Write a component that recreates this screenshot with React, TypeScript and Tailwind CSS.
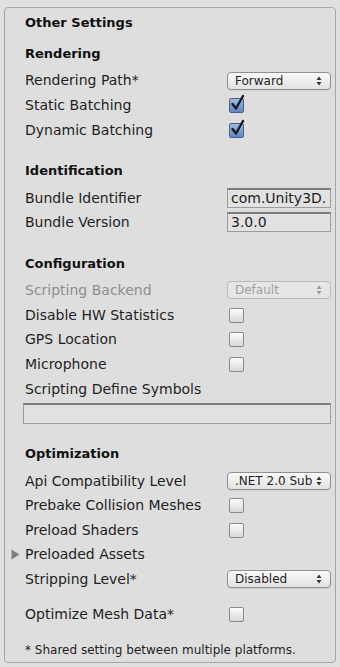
import React from "react";

const font = "font-['DejaVu_Sans',sans-serif]";

function Arrows({ dim }: { dim?: boolean }) {
  return (
    <svg width="6" height="10" viewBox="0 0 6 10" className="ml-auto shrink-0">
      <path d="M3 0.5 L5.5 4 L0.5 4 Z" fill={dim ? "#9a9a9a" : "#333"} />
      <path d="M3 9.5 L5.5 6 L0.5 6 Z" fill={dim ? "#9a9a9a" : "#333"} />
    </svg>
  );
}

function Dropdown({ value, dim }: { value: string; dim?: boolean }) {
  return (
    <div
      className={`flex items-center w-[104px] h-[18px] rounded-[4px] border pl-[7px] pr-[8px] text-[12px] leading-none ${
        dim
          ? "border-[#b9b9b9] bg-[#e6e6e6] text-[#a0a0a0]"
          : "border-[#8f8f8f] bg-gradient-to-b from-[#fafafa] to-[#e2e2e2] text-[#1e1e1e] shadow-[0_1px_0_rgba(0,0,0,0.08)]"
      }`}
    >
      <span className="whitespace-nowrap">{value}</span>
      <Arrows dim={dim} />
    </div>
  );
}

function Check({ on }: { on?: boolean }) {
  return (
    <div className="ml-[2px] relative w-[15px] h-[15px]">
      <div
        className={`w-[15px] h-[15px] rounded-[2px] border ${
          on
            ? "border-[#4a5f86] bg-gradient-to-b from-[#9fbbe6] to-[#5f86c4]"
            : "border-[#8a8a8a] bg-gradient-to-b from-[#fdfdfd] to-[#d8d8d8]"
        }`}
      />
      {on && (
        <svg width="16" height="18" viewBox="0 0 16 18" className="absolute left-[1px] top-[-4px]">
          <path d="M2.5 10 L6 14.5 L13 2" fill="none" stroke="#141a26" strokeWidth="2.4" strokeLinecap="round" strokeLinejoin="round" />
        </svg>
      )}
    </div>
  );
}

function Field({ value, wide }: { value?: string; wide?: boolean }) {
  return (
    <div
      className={`flex items-center h-[20px] border border-[#9c9c9c] border-t-[#7c7c7c] border-t-2 bg-[#e2e2e2] pl-[3px] text-[14px] text-[#1e1e1e] overflow-hidden whitespace-nowrap ${
        wide ? "w-full h-[21px]" : "w-[104px]"
      }`}
    >
      {value}
    </div>
  );
}

function Row({
  label,
  children,
  h = "h-[25px]",
  dim,
}: {
  label: string;
  children?: React.ReactNode;
  h?: string;
  dim?: boolean;
}) {
  return (
    <div className={`flex items-center ${h}`}>
      <div className={`w-[202px] whitespace-nowrap ${dim ? "text-[#8e8e8e]" : "text-[#1e1e1e]"}`}>{label}</div>
      {children}
    </div>
  );
}

function Heading({ text, mt }: { text: string; mt: string }) {
  return <div className={`h-[24px] flex items-center font-bold text-[13px] text-[#111] ${mt}`}>{text}</div>;
}

export default function App() {
  return (
    <div className={`w-[340px] h-[667px] bg-[#e0e0e0] pt-[7px] px-[4px] ${font}`}>
      <div className="h-[656px] border border-[#a6a6a6] rounded-[4px] bg-[#dedede] pl-[20px] pr-[4px] pt-[3px] text-[14px]">
        <Heading text="Other Settings" mt="mt-0" />
        <Heading text="Rendering" mt="mt-[7px]" />
        <div className="mt-[2px]">
          <Row label="Rendering Path*">
            <Dropdown value="Forward" />
          </Row>
          <Row label="Static Batching">
            <Check on />
          </Row>
          <Row label="Dynamic Batching">
            <Check on />
          </Row>
        </div>

        <Heading text="Identification" mt="mt-[16px]" />
        <div className="mt-[3px]">
          <Row label="Bundle Identifier" h="h-[24px]">
            <Field value="com.Unity3D." />
          </Row>
          <Row label="Bundle Version" h="h-[24px]">
            <Field value="3.0.0" />
          </Row>
        </div>

        <Heading text="Configuration" mt="mt-[18px]" />
        <div className="mt-[2px]">
          <Row label="Scripting Backend" h="h-[24.75px]" dim>
            <Dropdown value="Default" dim />
          </Row>
          <Row label="Disable HW Statistics" h="h-[24.75px]">
            <Check />
          </Row>
          <Row label="GPS Location" h="h-[24.75px]">
            <Check />
          </Row>
          <Row label="Microphone" h="h-[24.75px]">
            <Check />
          </Row>
          <Row label="Scripting Define Symbols" h="h-[24.75px]" />
        </div>
        <div className="mt-[1px] -ml-[2px]">
          <Field wide />
        </div>

        <Heading text="Optimization" mt="mt-[18px]" />
        <div className="mt-[3px]">
          <Row label="Api Compatibility Level" h="h-[24.5px]">
            <Dropdown value=".NET 2.0 Sub" />
          </Row>
          <Row label="Prebake Collision Meshes" h="h-[24.5px]">
            <Check />
          </Row>
          <Row label="Preload Shaders" h="h-[24.5px]">
            <Check />
          </Row>
          <div className="relative">
            <svg width="9" height="11" viewBox="0 0 9 11" className="absolute left-[-14px] top-[7px]">
              <path d="M0.5 0.5 L8.5 5.5 L0.5 10.5 Z" fill="#808080" />
            </svg>
            <Row label="Preloaded Assets" h="h-[24.5px]" />
          </div>
          <Row label="Stripping Level*" h="h-[24.5px]">
            <Dropdown value="Disabled" />
          </Row>
        </div>
        <div className="mt-[11px]">
          <Row label="Optimize Mesh Data*" h="h-[24px]">
            <Check />
          </Row>
        </div>
        <div className="mt-[16px] h-[16px] flex items-center text-[12px] text-[#1e1e1e] whitespace-nowrap">
          * Shared setting between multiple platforms.
        </div>
      </div>
    </div>
  );
}
